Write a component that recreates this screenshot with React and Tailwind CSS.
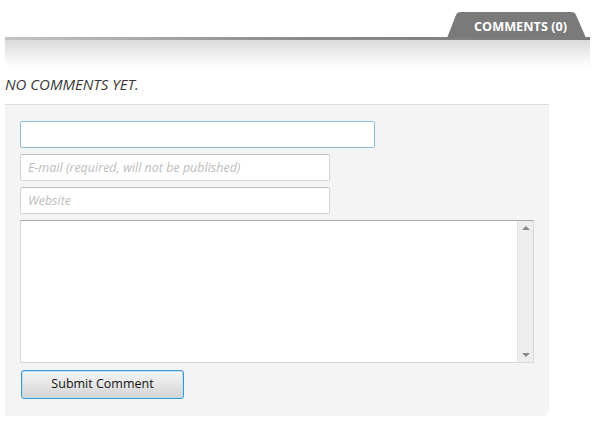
import React from 'react'

const font = { fontFamily: '"Open Sans", "Liberation Sans", sans-serif' }

function Tab() {
  return (
    <div className="relative w-[142px] h-[26px]">
      <svg className="absolute inset-0" width="142" height="26" viewBox="0 0 142 26">
        <path d="M0 26 L9 3 Q10 0 14 0 L124 0 Q128 0 129 3 L139 26 Z" fill="#7a7a7a" />
      </svg>
      <div className="relative h-full flex items-center pt-[3px] pl-[27px] text-[12.7px] font-bold text-white">
        COMMENTS (0)
      </div>
    </div>
  )
}

export default function App() {
  return (
    <div className="w-[593px] h-[422px] bg-white overflow-hidden" style={font}>
      <div className="pt-[12px]">
        <div className="flex justify-end pr-[4px]">
          <div className="-mb-[1px]"><Tab /></div>
        </div>
        <div className="ml-[5px] mr-[3px] h-[3px] bg-gradient-to-r from-[#c4c4c4] via-[#8a8a8a] to-[#7a7a7a]"></div>
        <div className="ml-[5px] mr-[3px] h-[27px] bg-gradient-to-b from-[#dadada] to-white"></div>
      </div>

      <p className="mt-[7px] ml-[5px] text-[15px] italic text-[#3a3a3a] leading-[20px]">NO COMMENTS YET.</p>

      <div className="mt-[10px] ml-[5px] w-[544px] h-[312px] bg-[#f4f4f4] border-t border-[#dcdcdc] rounded-br-[6px] pl-[15px] pt-[16px]">
        <div className="flex flex-col gap-[6px]">
          <input className="w-[355px] h-[27px] bg-white border border-[#8fbcd6] rounded-[2px] outline-none px-[7px] text-[12.5px]" />
          <input
            placeholder="E-mail (required, will not be published)"
            className="w-[310px] h-[27px] bg-white border border-[#d4d4d4] border-t-[#bcbcbc] rounded-[2px] outline-none px-[7px] text-[12.5px] italic placeholder:text-[#bdbdbd]"
          />
          <input
            placeholder="Website"
            className="w-[310px] h-[27px] bg-white border border-[#d4d4d4] border-t-[#bcbcbc] rounded-[2px] outline-none px-[7px] text-[12.5px] italic placeholder:text-[#bdbdbd]"
          />
          <div className="w-[514px] h-[143px] bg-white border border-[#d8d8d8] border-t-[#a8a8a8] flex">
            <textarea className="flex-1 resize-none outline-none bg-transparent overflow-hidden p-[4px] text-[12px]"></textarea>
            <div className="w-[16px] bg-[#eeeeee] border-l border-[#e2e2e2] flex flex-col items-center justify-between py-[5px]">
              <div className="w-0 h-0 border-l-[4px] border-r-[4px] border-b-[4px] border-l-transparent border-r-transparent border-b-[#8a8a8a]"></div>
              <div className="w-0 h-0 border-l-[4px] border-r-[4px] border-t-[4px] border-l-transparent border-r-transparent border-t-[#8a8a8a]"></div>
            </div>
          </div>
        </div>
        <button className="mt-[7px] ml-[1px] w-[163px] h-[29px] rounded-[3px] border border-[#3a96cc] bg-gradient-to-b from-[#f6f6f6] via-[#e6e6e6] to-[#d2d2d2] text-[12.5px] text-[#111] shadow-[inset_0_0_0_1px_#bfe0f4]">
          Submit Comment
        </button>
      </div>
    </div>
  )
}
